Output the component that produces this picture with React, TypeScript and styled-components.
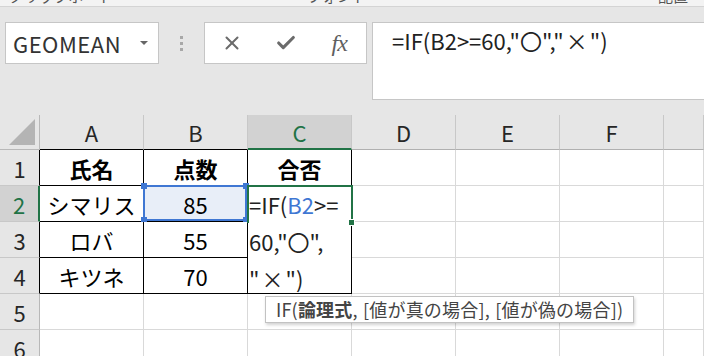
import styled, { createGlobalStyle } from 'styled-components'
import { X, Check } from 'lucide-react'

const JP = `"Noto Sans CJK JP", "Noto Sans", sans-serif`
const GREEN = '#217346'
const BLUE = '#3f77d3'

const GlobalStyle = createGlobalStyle`
  html, body {
    margin: 0;
    padding: 0;
  }
  body {
    width: 704px;
    height: 356px;
    overflow: hidden;
    background: #e6e6e6;
    font-family: ${JP};
  }
`

// only the bottom of the ribbon group captions shows at the top
const RibbonEdge = styled.div`
  display: flex;
  height: 6px;
  overflow: hidden;
  background: #f3f3f3;
  border-bottom: 1px solid #d4d4d4;
`

const GroupLabel = styled.div<{ $w: number }>`
  flex: 0 0 ${(p) => p.$w}px;
  text-align: center;
  font-size: 15px;
  line-height: 16px;
  margin-top: -12px;
  color: #555;
`

const FormulaRow = styled.div`
  display: flex;
  align-items: flex-start;
  height: 108px;
  box-sizing: border-box;
  padding: 15px 0 0 5px;
`

const NameBox = styled.div`
  display: flex;
  align-items: center;
  justify-content: space-between;
  width: 154px;
  height: 42px;
  box-sizing: border-box;
  padding: 0 10px 0 7px;
  background: #fff;
  border: 1px solid #c6c6c6;
  font-size: 22px;
  letter-spacing: 0.5px;
  color: #333;
`

const DropArrow = styled.span`
  width: 0;
  height: 0;
  border-left: 4px solid transparent;
  border-right: 4px solid transparent;
  border-top: 4px solid #666;
`

const Grip = styled.div`
  display: flex;
  flex-direction: column;
  align-items: center;
  justify-content: center;
  gap: 3px;
  width: 45px;
  height: 42px;
`

const GripDot = styled.span`
  width: 3px;
  height: 3px;
  background: #a8a8a8;
`

const FnBox = styled.div`
  display: flex;
  width: 163px;
  height: 42px;
  box-sizing: border-box;
  background: #fff;
  border: 1px solid #c6c6c6;
`

const FnSlot = styled.div`
  flex: 1;
  display: flex;
  align-items: center;
  justify-content: center;
  color: #6b6b6b;
`

const FxText = styled.span`
  font-family: "Liberation Serif", serif;
  font-style: italic;
  font-size: 24px;
  letter-spacing: -1px;
  color: #5f5f5f;
`

const FormulaBox = styled.div`
  flex: 1;
  height: 78px;
  margin-left: 5px;
  box-sizing: border-box;
  padding: 1px 0 0 19px;
  background: #fff;
  border: 1px solid #c6c6c6;
  border-right: none;
  font-size: 22px;
  line-height: 32px;
  color: #222;
  white-space: nowrap;
`

const Mult = styled.span`
  margin: 0 2px;
`

const Sheet = styled.div`
  display: grid;
  grid-template-columns: 40px repeat(6, 104px) 1fr;
  grid-template-rows: 35px repeat(6, 36px);
  background: #fff;
  font-size: 22px;
  color: #000;
`

const Corner = styled.div`
  position: relative;
  background: #e6e6e6;
  border-right: 1px solid #b8b8b8;
  border-bottom: 1px solid #b8b8b8;
  &::after {
    content: '';
    position: absolute;
    right: 4px;
    bottom: 4px;
    width: 0;
    height: 0;
    border-left: 26px solid transparent;
    border-bottom: 26px solid #b4b4b4;
  }
`

const ColHead = styled.div<{ $active?: boolean; $edge?: string }>`
  display: flex;
  align-items: center;
  justify-content: center;
  box-sizing: border-box;
  background: ${(p) => (p.$active ? '#d2d2d2' : '#e6e6e6')};
  color: ${(p) => (p.$active ? GREEN : '#262626')};
  border-right: 1px solid #c8c8c8;
  border-bottom: ${(p) => (p.$active ? 2 : 1)}px solid ${(p) => p.$edge ?? '#b0b0b0'};
  padding-top: ${(p) => (p.$active ? 1 : 0)}px;
`

const RowHead = styled.div<{ $active?: boolean; $edge?: string }>`
  display: flex;
  align-items: center;
  justify-content: center;
  box-sizing: border-box;
  background: ${(p) => (p.$active ? '#d2d2d2' : '#e6e6e6')};
  color: ${(p) => (p.$active ? GREEN : '#262626')};
  border-bottom: 1px solid #c8c8c8;
  border-right: ${(p) => (p.$active ? 2 : 1)}px solid ${(p) => p.$edge ?? '#b8b8b8'};
`

const Cell = styled.div<{ $table?: boolean; $bold?: boolean; $picked?: boolean }>`
  position: relative;
  display: flex;
  align-items: center;
  justify-content: center;
  box-sizing: border-box;
  background: ${(p) => (p.$picked ? '#e8eef8' : '#fff')};
  border-right: 1px solid ${(p) => (p.$table ? '#000' : '#d9d9d9')};
  border-bottom: 1px solid ${(p) => (p.$table ? '#000' : '#d9d9d9')};
  font-weight: ${(p) => (p.$bold ? 700 : 400)};
`

const RefFrame = styled.div`
  position: absolute;
  top: -1px;
  left: -1px;
  right: 0;
  bottom: 0;
  border: 2px solid ${BLUE};
`

const Handle = styled.span<{ $x: 'l' | 'r'; $y: 't' | 'b' }>`
  position: absolute;
  width: 6px;
  height: 6px;
  background: ${BLUE};
  ${(p) => (p.$x === 'l' ? 'left: -4px;' : 'right: -4px;')}
  ${(p) => (p.$y === 't' ? 'top: -4px;' : 'bottom: -4px;')}
`

const Editor = styled.div`
  position: relative;
  grid-column: 4;
  grid-row: 3 / span 3;
  box-sizing: border-box;
  background: #fff;
  border-right: 1px solid #000;
  border-bottom: 1px solid #000;
  padding-left: 1px;
  color: #222;
  z-index: 2;
`

const EditLine = styled.div`
  height: 37px;
  line-height: 37px;
  white-space: nowrap;
`

const RefText = styled.span`
  color: ${BLUE};
`

const ActiveFrame = styled.div`
  position: absolute;
  top: -1px;
  left: -1px;
  width: 106px;
  height: 38px;
  box-sizing: border-box;
  border: 2px solid ${GREEN};
  border-bottom: none;
`

const FillHandle = styled.span`
  position: absolute;
  top: 33px;
  right: -4px;
  width: 5px;
  height: 5px;
  background: ${GREEN};
  border: 1px solid #fff;
`

const Tip = styled.div`
  position: absolute;
  top: calc(100% + 3px);
  left: 17px;
  height: 27px;
  box-sizing: border-box;
  padding: 0 10px;
  background: #fff;
  border: 1px solid #c2c2c2;
  box-shadow: 1px 2px 3px rgba(0, 0, 0, 0.18);
  font-size: 18px;
  line-height: 25px;
  letter-spacing: 0.2px;
  word-spacing: 1px;
  color: #444;
  white-space: nowrap;
`

const TipArg = styled.b`
  font-weight: 700;
`

const COLS = ['A', 'B', 'C', 'D', 'E', 'F', '']

const Blank = ({ n }: { n: number }) => (
  <>
    {Array.from({ length: n }, (_, i) => (
      <Cell key={i} />
    ))}
  </>
)

const App = () => {
  return (
    <>
      <GlobalStyle />
      <RibbonEdge>
        <GroupLabel $w={122}>クリップボード</GroupLabel>
        <GroupLabel $w={430}>フォント</GroupLabel>
        <GroupLabel $w={242}>配置</GroupLabel>
      </RibbonEdge>

      <FormulaRow>
        <NameBox>
          GEOMEAN
          <DropArrow />
        </NameBox>
        <Grip>
          <GripDot />
          <GripDot />
          <GripDot />
        </Grip>
        <FnBox>
          <FnSlot>
            <X size={22} strokeWidth={2.2} />
          </FnSlot>
          <FnSlot>
            <Check size={22} strokeWidth={3.4} />
          </FnSlot>
          <FnSlot>
            <FxText>fx</FxText>
          </FnSlot>
        </FnBox>
        <FormulaBox>
          =IF(B2&gt;=60,"〇","<Mult>×</Mult>")
        </FormulaBox>
      </FormulaRow>

      <Sheet>
        <Corner />
        {COLS.map((c, i) => (
          <ColHead
            key={c || 'g'}
            $active={c === 'C'}
            $edge={c === 'C' ? GREEN : i < 2 ? '#000' : undefined}
          >
            {c}
          </ColHead>
        ))}

        <RowHead $edge="#000">1</RowHead>
        <Cell $table $bold>氏名</Cell>
        <Cell $table $bold>点数</Cell>
        <Cell $table $bold>合否</Cell>
        <Blank n={4} />

        <RowHead $active $edge={GREEN}>2</RowHead>
        <Cell $table>シマリス</Cell>
        <Cell $table $picked>
          85
          <RefFrame>
            <Handle $x="l" $y="t" />
            <Handle $x="r" $y="t" />
            <Handle $x="l" $y="b" />
            <Handle $x="r" $y="b" />
          </RefFrame>
        </Cell>
        <Editor>
          <EditLine>
            =IF(<RefText>B2</RefText>&gt;=
          </EditLine>
          <EditLine>60,"〇",</EditLine>
          <EditLine>
            "<Mult>×</Mult>")
          </EditLine>
          <ActiveFrame />
          <FillHandle />
          <Tip>
            IF(<TipArg>論理式</TipArg>, [値が真の場合], [値が偽の場合])
          </Tip>
        </Editor>
        <Blank n={4} />

        <RowHead $edge="#000">3</RowHead>
        <Cell $table>ロバ</Cell>
        <Cell $table>55</Cell>
        <Blank n={4} />

        <RowHead $edge="#000">4</RowHead>
        <Cell $table>キツネ</Cell>
        <Cell $table>70</Cell>
        <Blank n={4} />

        <RowHead>5</RowHead>
        <Blank n={7} />
        <RowHead>6</RowHead>
        <Blank n={7} />
      </Sheet>
    </>
  )
}

export default App
